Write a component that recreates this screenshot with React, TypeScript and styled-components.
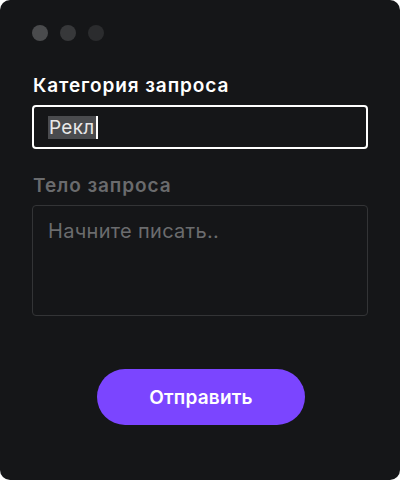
import React from "react";
import styled, { createGlobalStyle } from "styled-components";

const Global = createGlobalStyle`
  html, body { margin: 0; padding: 0; background: #ffffff; }
  * { box-sizing: border-box; }
`;

const Window = styled.div`
  width: 400px;
  height: 480px;
  background: #151618;
  border-radius: 10px;
  padding: 25px 32px 0 32px;
  display: flex;
  flex-direction: column;
  font-family: Inter, "Noto Sans", sans-serif;
`;

const Dots = styled.div`
  display: flex;
  gap: 12px;
  margin-bottom: 34px;
`;

const Dot = styled.span<{ $c: string }>`
  width: 16px;
  height: 16px;
  border-radius: 50%;
  background: ${(p) => p.$c};
`;

const Label = styled.div<{ $muted?: boolean }>`
  font-size: 19px;
  font-weight: 600;
  letter-spacing: 0.9px;
  line-height: 22px;
  color: ${(p) => (p.$muted ? "#6a6b6d" : "#ffffff")};
  margin-bottom: 8px;
  margin-left: 1px;
`;

const InputBox = styled.div`
  height: 44px;
  border: 2px solid #ffffff;
  border-radius: 4px;
  display: flex;
  align-items: center;
  padding-left: 14px;
  margin-bottom: 26px;
`;

const Selected = styled.span`
  background: #4a4b4e;
  color: #e8e8e8;
  font-size: 19px;
  letter-spacing: 0.3px;
  line-height: 23px;
  padding: 0 1px;
`;

const Caret = styled.span`
  width: 2px;
  height: 23px;
  background: #ffffff;
`;

const TextArea = styled.div`
  height: 111px;
  border: 1px solid #333436;
  border-radius: 4px;
  padding: 13px 15px;
  font-size: 20px;
  letter-spacing: 0.3px;
  line-height: 24px;
  color: #6b6c6e;
`;

const Footer = styled.div`
  display: flex;
  justify-content: center;
  margin-top: 53px;
`;

const Button = styled.button`
  width: 208px;
  height: 56px;
  margin-left: 2px;
  border: none;
  border-radius: 28px;
  background: #7b45ff;
  color: #ffffff;
  font-family: Inter, "Noto Sans", sans-serif;
  font-size: 19px;
  font-weight: 600;
  letter-spacing: 0.2px;
  cursor: pointer;
`;

export default function App() {
  return (
    <>
      <Global />
      <Window>
        <Dots>
          <Dot $c="#4a4b4d" />
          <Dot $c="#37383a" />
          <Dot $c="#2b2c2e" />
        </Dots>
        <Label>Категория запроса</Label>
        <InputBox>
          <Selected>Рекл</Selected>
          <Caret />
        </InputBox>
        <Label $muted>Тело запроса</Label>
        <TextArea>Начните писать..</TextArea>
        <Footer>
          <Button>Отправить</Button>
        </Footer>
      </Window>
    </>
  );
}
